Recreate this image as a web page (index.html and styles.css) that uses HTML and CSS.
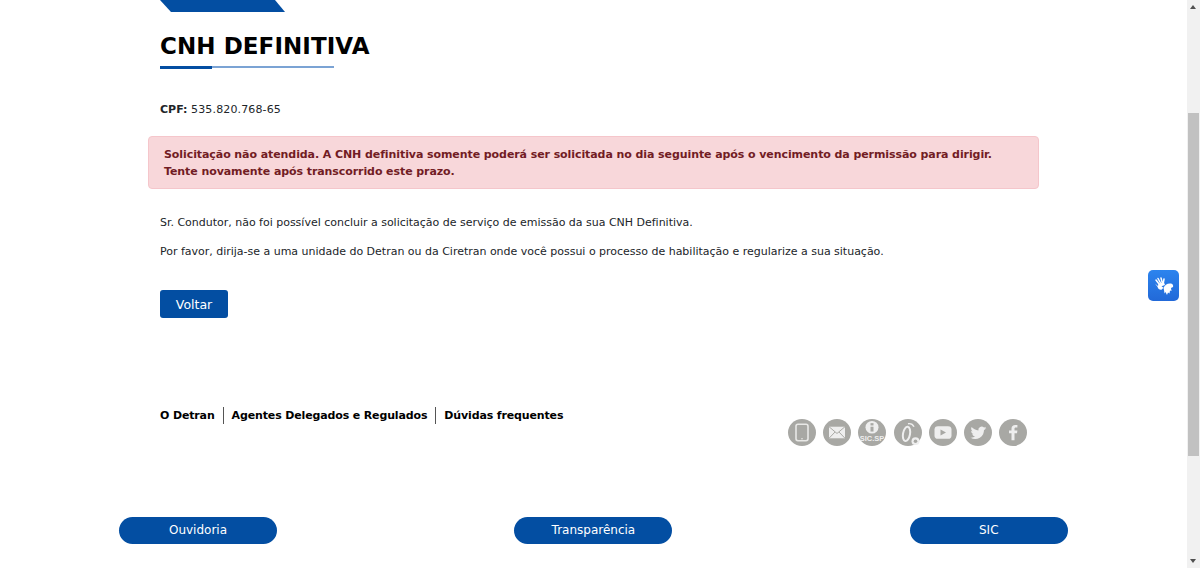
FILE: index.html
```html
<!DOCTYPE html>
<html lang="pt-BR">
<head>
<meta charset="utf-8">
<title>CNH Definitiva</title>
<link rel="stylesheet" href="styles.css">
</head>
<body>
<main class="page">
  <div class="content">
    <div class="tab"></div>
    <h1 class="title">CNH DEFINITIVA</h1>
    <div class="rule"><span class="rule-strong"></span></div>
    <p class="cpf"><strong>CPF:</strong> 535.820.768-65</p>
    <div class="alert">Solicitação não atendida. A CNH definitiva somente poderá ser solicitada no dia seguinte após o vencimento da permissão para dirigir.<br>Tente novamente após transcorrido este prazo.</div>
    <p class="text first">Sr. Condutor, não foi possível concluir a solicitação de serviço de emissão da sua CNH Definitiva.</p>
    <p class="text second">Por favor, dirija-se a uma unidade do Detran ou da Ciretran onde você possui o processo de habilitação e regularize a sua situação.</p>
    <button class="back">Voltar</button>
    <div class="footer-row">
      <nav class="links">
        <a class="link">O Detran</a>
        <a class="link">Agentes Delegados e Regulados</a>
        <a class="link">Dúvidas frequentes</a>
      </nav>
      <div class="social">
        <svg class="soc" viewBox="0 0 28 28" preserveAspectRatio="none"><circle cx="14" cy="14" r="14" fill="#a8a8a4"/><rect x="8" y="5.500" width="12" height="17" rx="2" fill="none" stroke="#e8e8e6" stroke-width="1.600"/><circle cx="14" cy="20.500" r=".8" fill="#e8e8e6"/></svg>
        <svg class="soc" viewBox="0 0 28 28" preserveAspectRatio="none"><circle cx="14" cy="14" r="14" fill="#a8a8a4"/><rect x="6" y="8" width="16" height="12" fill="#eee"/><path d="M6 8l8 7 8-7M6 20l6-6.500M22 20l-6-6.500" fill="none" stroke="#a8a8a4" stroke-width="1"/></svg>
        <svg class="soc" viewBox="0 0 28 28" preserveAspectRatio="none"><circle cx="14" cy="14" r="14" fill="#a8a8a4"/><circle cx="14" cy="8.500" r="6.500" fill="#eee"/><rect x="12.500" y="8" width="3" height="5" fill="#a8a8a4"/><rect x="12.500" y="4.300" width="3" height="2.400" fill="#a8a8a4"/><text class="sic" x="14" y="22.500">SIC.SP</text></svg>
        <svg class="soc" viewBox="0 0 28 28" preserveAspectRatio="none"><circle cx="14" cy="14" r="14" fill="#a8a8a4"/><ellipse cx="12.500" cy="15.500" rx="3.500" ry="7.500" fill="none" stroke="#eee" stroke-width="2" transform="rotate(10 12.500 15.500)"/><path d="M14 5q4-1 6 3" fill="none" stroke="#eee" stroke-width="1.500"/><circle cx="21.500" cy="23" r="4" fill="#eee"/><circle cx="21.500" cy="23" r="1.800" fill="#a8a8a4"/></svg>
        <svg class="soc" viewBox="0 0 28 28" preserveAspectRatio="none"><circle cx="14" cy="14" r="14" fill="#a8a8a4"/><rect x="5.500" y="7.500" width="17" height="13" rx="3.500" fill="#eee"/><path d="M11.500 11v6l5.500-3z" fill="#a8a8a4"/></svg>
        <svg class="soc" viewBox="0 0 28 28" preserveAspectRatio="none"><circle cx="14" cy="14" r="14" fill="#a8a8a4"/><path d="M22.500 9.300c-.6.300-1.200.4-1.900.5.700-.4 1.200-1 1.400-1.800-.6.400-1.300.6-2 .8a3.300 3.300 0 0 0-5.600 3C11.700 11.700 9.300 10.400 7.600 8.400c-.9 1.500-.4 3.400 1 4.400-.5 0-1-.2-1.500-.4 0 1.600 1.100 2.900 2.600 3.200-.5.100-1 .2-1.500.1.400 1.300 1.600 2.200 3.100 2.300-1.400 1.100-3.100 1.600-4.800 1.400 4.500 2.900 10.400 1.100 12.600-3.600.6-1.400.9-2.800.9-4.300.7-.5 1.300-1 1.800-1.700z" fill="#eee"/></svg>
        <svg class="soc" viewBox="0 0 28 28" preserveAspectRatio="none"><circle cx="14" cy="14" r="14" fill="#a8a8a4"/><path d="M15.500 22v-7.300h2.500l.4-2.900h-2.900v-1.700c0-.8.200-1.400 1.400-1.400h1.500V6.200c-.3 0-1.200-.1-2.200-.1-2.200 0-3.700 1.300-3.700 3.700v2h-2.500v2.900h2.500V22z" fill="#eee"/></svg>
      </div>
    </div>
  </div>
  <div class="pills">
    <a class="pill">Ouvidoria</a>
    <a class="pill">Transparência</a>
    <a class="pill">SIC</a>
  </div>
</main>
<button class="vlibras" aria-label="Libras">
  <svg viewBox="0 0 22 22" width="22" height="22"><path d="M3 5l3 4M5 3.500l2.500 4.500M8 3l1.200 4.500M11 4l-.8 4.500" fill="none" stroke="#fff" stroke-width="1.500" stroke-linecap="round"/><path d="M2 8.500l3 2.500.5-2.500 5.500-1 1 2.500-3.500 1.300 2 1.400-2 2c-2 .3-3.500-1-4-3z" fill="#fff"/><path d="M10.500 13c1-3 4-5 7.500-4.500 2 .5 2.500 2 2 3.500l-2 1 .5 3-1.500-.5-.5 3-1.500-1-1 2.500-1.500-3-1 1.500-.5-3.500z" fill="#fff"/></svg>
</button>
<div class="scrollbar">
  <span class="arrow up"></span>
  <span class="thumb"></span>
  <span class="arrow down"></span>
</div>
</body>
</html>
```
FILE: styles.css
```css
* { box-sizing: border-box; }
html, body { margin: 0; height: 568px; overflow: hidden; background: #fff; }
body { font-family: "DejaVu Sans", sans-serif; font-size: 11px; color: #212529; }
.page { width: 1187px; height: 568px; }
.content { padding: 0 160px; }
.tab { width: 125px; height: 12px; background: #034ea2; margin-bottom: 21px; clip-path: polygon(0 0, 115px 0, 125px 12px, 11px 12px); }
.title { margin: 0; font-size: 23px; line-height: 26px; font-weight: 700; color: #000; letter-spacing: .07px; }
.rule { width: 174px; height: 2px; background: #7ba3d4; margin-top: 7px; }
.rule-strong { display: block; width: 52px; height: 3px; background: #034ea2; }
.cpf { margin: 33px 0 0; line-height: 18px; letter-spacing: .14px; }
.cpf strong { letter-spacing: 0; }
.alert { margin: 17px -12px 0; width: 891px; height: 53px; padding: 9px 15px; background: #f8d7da; border: 1px solid #f5c6cb; border-radius: 4px; color: #721c24; font-weight: 700; line-height: 17px; letter-spacing: -.08px; }
.text { margin: 0; line-height: 18px; letter-spacing: -.012px; }
.first { margin-top: 25px; }
.second { margin-top: 11px; }
.back { display: block; margin-top: 29px; width: 68px; height: 28px; padding: 0; background: #034ea2; color: #fff; border: 0; border-radius: 3px; font: 12.500px "DejaVu Sans", sans-serif; }
.footer-row { display: flex; justify-content: space-between; align-items: flex-start; margin-top: 89px; }
.links { display: flex; }
.link { font-weight: 700; color: #000; line-height: 17px; padding: 0 8px; border-left: 1px solid #555; letter-spacing: -.14px; }
.link:first-child { padding-left: 0; border-left: 0; }
.social { display: flex; gap: 7.150px; margin-top: 12px; }
.soc { width: 28px; height: 27px; display: block; }
.sic { font: 700 7.500px "Liberation Sans", sans-serif; fill: #eee; text-anchor: middle; }
.pills { display: flex; gap: 237.400px; padding-left: 119px; margin-top: 70.500px; }
.pill { width: 158px; height: 27.500px; border-radius: 14px; background: #034ea2; color: #fff; font-size: 12px; line-height: 27.500px; text-align: center; }
.vlibras { position: fixed; left: 1148px; top: 270px; width: 31px; height: 31px; padding: 4px; border: 0; border-radius: 5px; background: linear-gradient(#2c84ee, #2269d8); display: flex; align-items: center; justify-content: center; }
.scrollbar { position: fixed; left: 1187px; top: 0; width: 13px; height: 568px; background: #f1f1f1; }
.thumb { position: absolute; left: 1px; right: 1px; top: 113px; height: 343px; background: #c1c1c1; }
.arrow { position: absolute; left: 3px; width: 0; height: 0; border-left: 3.500px solid transparent; border-right: 3.500px solid transparent; }
.up { top: 5px; border-bottom: 4px solid #505050; }
.down { bottom: 5px; border-top: 4px solid #505050; }
```
